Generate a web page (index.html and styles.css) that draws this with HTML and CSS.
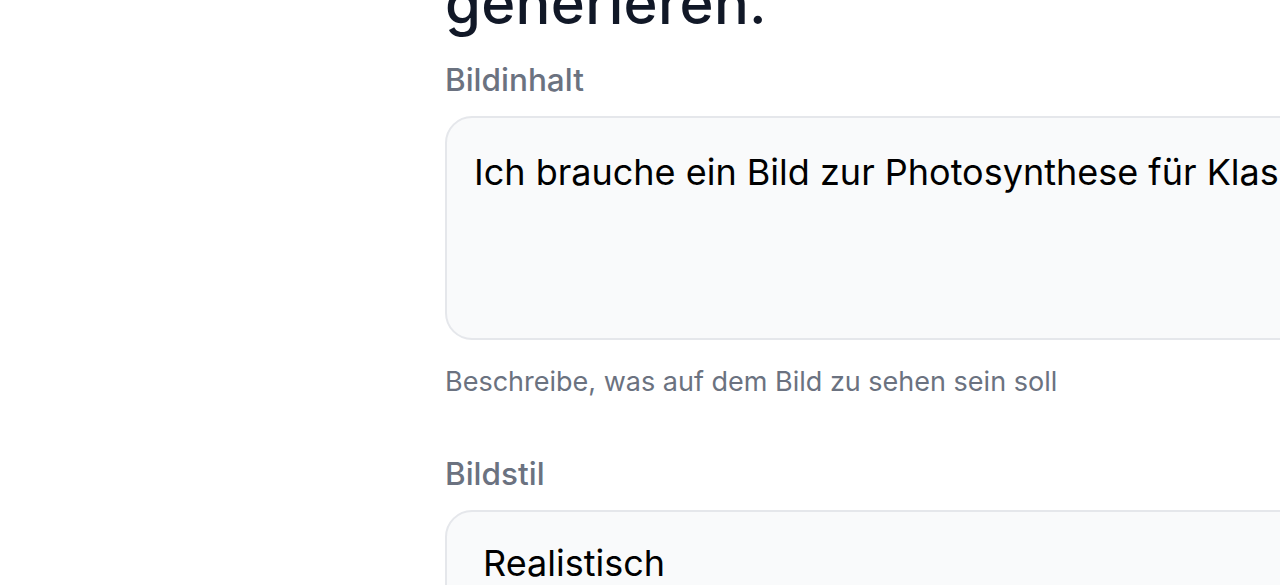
FILE: index.html
```html
<!DOCTYPE html>
<html lang="de">
<head>
<meta charset="utf-8">
<title>Bild generieren</title>
<link rel="stylesheet" href="styles.css">
</head>
<body>
<main class="page">
  <form class="form">
    <h1 class="title">Lass ein Bild<br>generieren.</h1>
    <div class="field">
      <label class="label" for="inhalt">Bildinhalt</label>
      <textarea class="textarea" id="inhalt" rows="3">Ich brauche ein Bild zur Photosynthese für Klasse 7</textarea>
      <p class="hint">Beschreibe, was auf dem Bild zu sehen sein soll</p>
    </div>
    <div class="field">
      <label class="label" for="stil">Bildstil</label>
      <div class="select" id="stil">Realistisch</div>
    </div>
  </form>
</main>
</body>
</html>
```

FILE: styles.css
```css
html, body {
  margin: 0;
  padding: 0;
  background: #ffffff;
  overflow: hidden;
  height: 585px;
}
.page {
  padding-left: 445px;
  width: 1100px;
}
.form {
  display: flex;
  flex-direction: column;
}
.title {
  font-family: Inter, "Noto Sans", sans-serif;
  font-weight: 500;
  font-size: 58px;
  line-height: 69.6px;
  color: #111827;
  margin: -101px 0 0 0;
  letter-spacing: 0.3px;
}
.field {
  display: flex;
  flex-direction: column;
}
.label {
  font-family: Inter, "Noto Sans", sans-serif;
  font-weight: 500;
  font-size: 31.5px;
  line-height: 45px;
  color: #6b7280;
  margin-top: 19px;
  margin-bottom: 14px;
}
.field + .field .label {
  margin-top: 49px;
}
.textarea {
  box-sizing: border-box;
  height: 224px;
  width: 1000px;
  border: 2px solid #e5e7eb;
  border-radius: 27px;
  background: #f9fafb;
  padding: 27px 27px;
  font-family: Inter, "Noto Sans", sans-serif;
  font-size: 36px;
  line-height: 54px;
  color: #000000;
  resize: none;
  outline: none;
  white-space: nowrap;
  overflow: hidden;
}
.hint {
  font-family: Inter, "Noto Sans", sans-serif;
  font-size: 27px;
  line-height: 40px;
  color: #6b7280;
  margin: 22px 0 0 0;
}
.select {
  box-sizing: border-box;
  width: 1000px;
  height: 120px;
  border: 2px solid #e5e7eb;
  border-radius: 27px;
  background: #f9fafb;
  padding: 24px 36px;
  font-family: Inter, "Noto Sans", sans-serif;
  font-size: 36px;
  line-height: 54px;
  color: #000000;
}
```
